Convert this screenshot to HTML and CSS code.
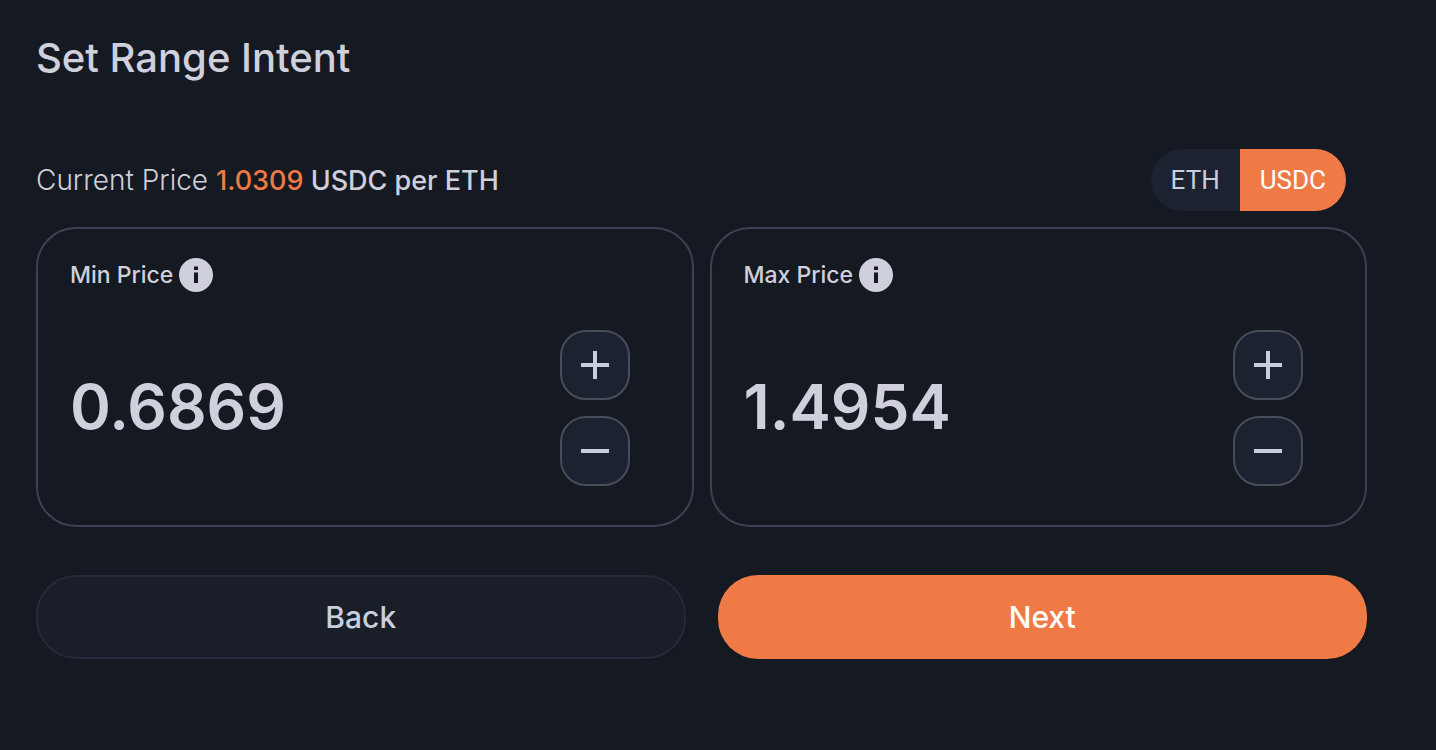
FILE: index.html
```html
<!DOCTYPE html>
<html lang="en">
<head>
    <meta charset="UTF-8">
    <meta name="viewport" content="width=device-width, initial-scale=1.0">
    <title>Set Range Intent</title>
    <link rel="stylesheet" href="styles.css">
</head>

<body>
    <main class="range-intent">
        <h1>Set Range Intent</h1>

        <!-- Current price and token switch -->
        <div class="price-row">
            <p class="current-price">Current Price <strong><span class="highlight">1.0309</span> USDC per ETH</strong></p>
            <div class="token-toggle">
                <button type="button">ETH</button>
                <button type="button" class="active">USDC</button>
            </div>
        </div>

        <!-- Min / max price -->
        <div class="cards">
            <section class="card">
                <div class="card-label">
                    <label for="min-price">Min Price</label>
                    <svg class="info" viewBox="0 0 34 34" aria-hidden="true">
                        <circle cx="17" cy="17" r="17"/>
                        <path d="M15 8.5h4v3.5h-4zM15 14.5h4v10.5h-4z"/>
                    </svg>
                </div>
                <div class="card-body">
                    <input id="min-price" type="text" value="0.6869">
                    <div class="steps">
                        <button type="button" aria-label="Increase min price" onclick="step('min-price', 1)">
                            <svg viewBox="0 0 28 28"><path d="M12 0h4v12h12v4H16v12h-4V16H0v-4h12z"/></svg>
                        </button>
                        <button type="button" aria-label="Decrease min price" onclick="step('min-price', -1)">
                            <svg viewBox="0 0 28 28"><path d="M0 12h28v4H0z"/></svg>
                        </button>
                    </div>
                </div>
            </section>

            <section class="card">
                <div class="card-label">
                    <label for="max-price">Max Price</label>
                    <svg class="info" viewBox="0 0 34 34" aria-hidden="true">
                        <circle cx="17" cy="17" r="17"/>
                        <path d="M15 8.5h4v3.5h-4zM15 14.5h4v10.5h-4z"/>
                    </svg>
                </div>
                <div class="card-body">
                    <input id="max-price" type="text" value="1.4954">
                    <div class="steps">
                        <button type="button" aria-label="Increase max price" onclick="step('max-price', 1)">
                            <svg viewBox="0 0 28 28"><path d="M12 0h4v12h12v4H16v12h-4V16H0v-4h12z"/></svg>
                        </button>
                        <button type="button" aria-label="Decrease max price" onclick="step('max-price', -1)">
                            <svg viewBox="0 0 28 28"><path d="M0 12h28v4H0z"/></svg>
                        </button>
                    </div>
                </div>
            </section>
        </div>

        <div class="actions">
            <button type="button" class="back">Back</button>
            <button type="button" class="next">Next</button>
        </div>
    </main>

    <script>
        function step(id, direction) {
            var input = document.getElementById(id);
            var value = Number(input.value) + direction * 0.0001;
            input.value = Math.max(0, value).toFixed(4);
        }
    </script>
</body>
</html>
```
FILE: styles.css
```css
* {
    box-sizing: border-box;
}

body {
    margin: 0;
    background: #151922;
    color: #cfd0dc;
    font-family: Inter, "Liberation Sans", sans-serif;
}

button, input {
    font-family: inherit;
    color: inherit;
}

button {
    padding: 0;
    border: none;
    cursor: pointer;
}

.range-intent {
    padding: 32px 69px 32px 36px;
}

h1 {
    margin: 0 0 65px;
    font-size: 40px;
    line-height: 52px;
    font-weight: 500;
}

.price-row {
    display: flex;
    justify-content: space-between;
    align-items: center;
    margin-bottom: 16px;
    padding-right: 21px;
}

.current-price {
    margin: 0;
    font-size: 28px;
    font-weight: 300;
}

.current-price strong {
    font-size: 27px;
    font-weight: 500;
}

.current-price .highlight {
    color: #ef7a45;
}

.token-toggle {
    display: flex;
    height: 62px;
    border-radius: 31px;
    overflow: hidden;
}

.token-toggle button {
    padding: 0 20px;
    background: #1d2230;
    color: #c8cedc;
    font-family: Roboto, sans-serif;
    font-size: 26px;
}

.token-toggle .active {
    background: #ef7a45;
    color: #fff;
}

.cards {
    display: grid;
    grid-template-columns: 1fr 1fr;
    gap: 16px;
    margin-bottom: 48px;
}

.card {
    min-width: 0;
    height: 300px;
    padding: 28px 62px 0 32px;
    border: 2px solid #3c4254;
    border-radius: 40px;
}

.card-label {
    display: flex;
    align-items: center;
    gap: 6px;
    height: 36px;
    margin-bottom: 37px;
    font-size: 23px;
    font-weight: 500;
}

.info {
    width: 34px;
    height: 34px;
    fill: #cfd0dc;
}

.info path {
    fill: #151922;
}

.card-body {
    display: flex;
    justify-content: space-between;
    align-items: center;
}

.card-body input {
    flex: 1;
    min-width: 0;
    padding: 0 0 4px;
    border: none;
    outline: none;
    background: transparent;
    font-size: 62px;
    font-weight: 600;
}

.steps {
    display: flex;
    flex-direction: column;
    gap: 16px;
}

.steps button {
    display: flex;
    justify-content: center;
    align-items: center;
    width: 70px;
    height: 70px;
    background: #1d2230;
    border: 2px solid #484b5a;
    border-radius: 26px;
}

.steps svg {
    width: 28px;
    height: 28px;
    fill: #c8cedc;
}

.actions {
    display: grid;
    grid-template-columns: 1fr 1fr;
    gap: 32px;
}

.actions button {
    height: 84px;
    border-radius: 40px;
    font-size: 30px;
    font-weight: 500;
}

.actions .back {
    background: #191e29;
    border: 2px solid #242a3a;
    color: #c8cedc;
}

.actions .next {
    background: #ef7a45;
    color: #fff;
}
```
